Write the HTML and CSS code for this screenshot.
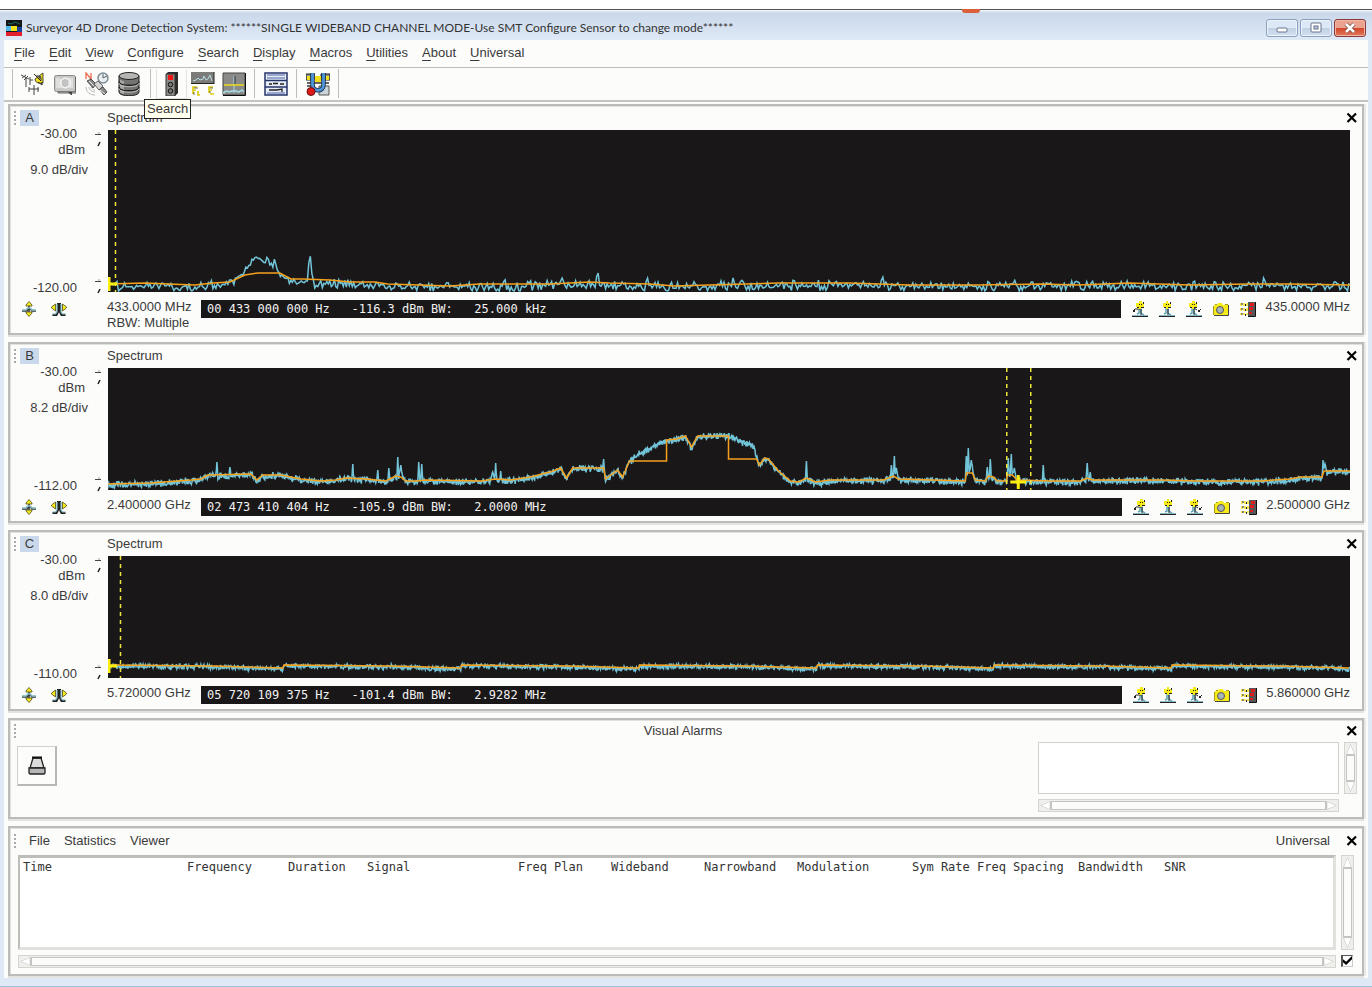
FILE: index.html
```html
<!doctype html>
<html lang="en">
  <head>
    <meta charset="UTF-8" />
    <meta name="viewport" content="width=device-width, initial-scale=1.0" />
    <title>Surveyor 4D Drone Detection System</title>
    <link rel="stylesheet" href="styles.css">
    <script src="plots.js" defer></script>
  </head>

  <body>
    <!-- shared icons -->
    <svg class="sprite" aria-hidden="true">
      <symbol id="i-expand-v" viewBox="0 0 16 16">
        <path d="M8 3v11" stroke="#333" stroke-width="1.500" />
        <path d="M1 10h5l1.500-2h2l1.500 2h4" fill="none" stroke="#333" stroke-width="1.500" />
        <path d="M1 9h4l2-2h2l2 2h4" fill="none" stroke="#7fb9c4" stroke-width="1.500" />
        <path d="M8 .5L11 4v1H5V4zM8 15.500L11 12v-1H5v1z" fill="#f7ea19" stroke="#4d4a20" stroke-width=".8" />
      </symbol>
      <symbol id="i-expand-h" viewBox="0 0 16 16">
        <path d="M1.500 14h4l1.500-3V2M14.500 14h-4L9 11V2" fill="none" stroke="#222" stroke-width="2" />
        <path d="M1.500 13h3l1.500-2V3M14.500 13h-3L10 11V3" fill="none" stroke="#7fb9c4" stroke-width="1.200" />
        <path d="M4.500 3v7L.5 7V6zM11.500 3v7l4-3V6z" fill="#f7ea19" stroke="#4d4a20" stroke-width=".8" />
      </symbol>
      <symbol id="i-peak-left" viewBox="0 0 16 16">
        <path d="M0 15h16M5 13l2-1V8h2v4l3 2" fill="none" stroke="#5fa3b3" stroke-width="1.500" />
        <path d="M0 15.500h16M9 8v6M1 10l2-2h5" fill="none" stroke="#222" />
        <path d="M4 2h3V0h3v2h2v4H9v2H6V6H4z" fill="#f7ea19" />
        <path d="M7 3h1v1H7zM9 3h1v1H9zM11 1h1v2h-1zM9 6h3v1H9zM5 6h2v1H5zM1 9h2v2H1z" fill="#222" />
      </symbol>
      <symbol id="i-peak" viewBox="0 0 16 16">
        <path d="M0 15h16M5 13l2-1V8h2v4l3 2" fill="none" stroke="#5fa3b3" stroke-width="1.500" />
        <path d="M0 15.500h16M9 8v6" fill="none" stroke="#222" />
        <path d="M4 2h3V0h2v2h3v4H9v2H7V6H4z" fill="#f7ea19" />
        <path d="M7 3h1v1H7zM9 3h1v1H9zM11 1h1v2h-1zM9 6h3v1H9zM5 6h2v1H5z" fill="#222" />
      </symbol>
      <symbol id="i-peak-right" viewBox="0 0 16 16">
        <path d="M0 15h16M4 13l2-1V8h2v4l3 2" fill="none" stroke="#5fa3b3" stroke-width="1.500" />
        <path d="M0 15.500h16M8 8v6M8 7l3 2M13 10l2-2" fill="none" stroke="#222" />
        <path d="M3 2h3V0h3v2h2v4H8v2H6V6H3z" fill="#f7ea19" />
        <path d="M6 3h1v1H6zM8 3h1v1H8zM10 1h1v2h-1zM8 6h3v1H8zM4 6h2v1H4zM12 9h2v2h-2z" fill="#222" />
      </symbol>
      <symbol id="i-camera" viewBox="0 0 16 16">
        <path d="M1 4h3l1-2h4l1 2h5v10H1z" fill="#f7ea19" />
        <path d="M1 14.500h14.500V4" fill="none" stroke="#444" />
        <path d="M.5 14V5M2 3.500h2M12 3.500h3" fill="none" stroke="#a99a20" />
        <circle cx="7" cy="9" r="3.500" fill="#a9b4b8" stroke="#555" />
      </symbol>
      <symbol id="i-scan" viewBox="0 0 16 16">
        <path d="M1 2v12M4 2v12M7 2v12" stroke="#f0df20" stroke-width="1.500" stroke-dasharray="3 2" />
        <path d="M2 2v12M5.500 3v12" stroke="#222" stroke-dasharray="2 3" />
        <path d="M8 1h7v14H8z" fill="#555" />
        <path d="M15.500 1v14.500H8" fill="none" stroke="#111" />
        <path d="M10 2h4v3h-4zM9 6h4v3H9zM9 11h3v2H9z" fill="#e01b1b" />
      </symbol>
      <symbol id="i-close" viewBox="0 0 12 12">
        <path d="M1.500 1.500l8.500 8.500M10 1.500L1.500 10" stroke="#000" stroke-width="2.200" />
      </symbol>
      <symbol id="i-ticks" viewBox="0 0 8 16">
        <path d="M1 3.500h6M5 1.500v1" stroke="#444" />
        <path d="M6 11l-2 4" stroke="#222" stroke-width="1.500" />
      </symbol>
    </svg>

    <div class="desktop"><span class="tab"></span></div>
    <div class="window">
      <header class="titlebar">
        <svg class="logo" viewBox="0 0 16 16" aria-hidden="true">
          <path d="M0 0h16v16H0z" fill="#151515" />
          <path d="M2 3l3 1 4-2 5 2" fill="none" stroke="#1c6d6a" />
          <path d="M0 6h6v5H0z" fill="#4fb6e8" />
          <path d="M5 6h6v5H5z" fill="#f4e21b" />
          <path d="M11 7h5v5h-5z" fill="#1c3f96" />
          <path d="M0 12h16v4H0z" fill="#e3202b" />
        </svg>
        <h1>Surveyor 4D Drone Detection System: ******SINGLE WIDEBAND CHANNEL MODE-Use SMT Configure Sensor to change mode******</h1>
        <div class="window-buttons">
          <button aria-label="Minimize"><svg viewBox="0 0 14 12"><rect x="2" y="6" width="10" height="4" rx="1" fill="#fff" stroke="#66738a" /></svg></button>
          <button aria-label="Maximize"><svg viewBox="0 0 14 12"><rect x="2" y="1" width="10" height="9" rx="1" fill="#fff" stroke="#66738a" /><rect x="5" y="4" width="4" height="3" fill="#b9c8dc" stroke="#66738a" /></svg></button>
          <button class="quit" aria-label="Close"><svg viewBox="0 0 14 12"><path d="M3 2l8 8M11 2l-8 8" stroke="#7c4a4a" stroke-width="4" /><path d="M3 2l8 8M11 2l-8 8" stroke="#fff" stroke-width="2.500" /></svg></button>
        </div>
      </header>

      <div class="client">
        <nav class="menubar">
          <button><u>F</u>ile</button>
          <button><u>E</u>dit</button>
          <button><u>V</u>iew</button>
          <button><u>C</u>onfigure</button>
          <button><u>S</u>earch</button>
          <button><u>D</u>isplay</button>
          <button><u>M</u>acros</button>
          <button><u>U</u>tilities</button>
          <button><u>A</u>bout</button>
          <button><u>U</u>niversal</button>
        </nav>

        <div class="toolbar" role="toolbar">
          <div class="tools wide">
            <button aria-label="Antennas">
              <svg viewBox="0 0 24 24">
                <path d="M0 3l8 4M1 6l4-3M3 8l4-4M5 5v10M9 5v8M9 8h3M8 17h10M8 15v5M13 13v10M17 15v5" fill="none" stroke="#444" />
                <path d="M22 1v10c-5 1-8-1-8-4z" fill="#f2e01d" stroke="#222" stroke-width=".8" />
                <path d="M13 2l7 7M17 10l4 3v-3" fill="none" stroke="#222" />
                <path d="M15 3l5 1 1 5z" fill="#555" />
              </svg>
            </button>
            <button aria-label="Receiver">
              <svg viewBox="0 0 24 24">
                <rect x="1.500" y="3.500" width="21" height="16" rx="2" fill="#c9c9c7" stroke="#8b8b89" />
                <path d="M22.500 5v15H5v1h18" fill="none" stroke="#666" />
                <path d="M4 6v10M6 6v10M8 7v9M17 6v10M19 6v10" stroke="#f5f5f5" />
                <circle cx="12.500" cy="11" r="5" fill="#ddd" stroke="#fff" />
                <path d="M10 8v6M12 7v8M14 8v6" stroke="#aaa" />
                <path d="M15 20l3 3h1v-3z" fill="#444" />
              </svg>
            </button>
            <button aria-label="Navigation">
              <svg viewBox="0 0 24 24">
                <path d="M1 7V1l5 6V1" fill="none" stroke="#ec6a4c" stroke-width="1.300" />
                <circle cx="18" cy="6" r="5" fill="#e9eef0" stroke="#7e8d94" stroke-width="1.500" />
                <path d="M18 2v4l4-2" fill="none" stroke="#54646c" />
                <path d="M2 9l4-2 5 5-3 4zM14 17l4-2 4 5-3 3z" fill="#888" stroke="#333" stroke-width=".8" />
                <path d="M9 12l4-3 5 5-4 4z" fill="#d5d5d5" stroke="#444" stroke-width=".8" />
                <path d="M4 9l5 5M15 18l5 4" stroke="#eee" />
                <path d="M1 15c0 5 4 8 9 8M4 15c0 3 3 5 6 5M6 15c1 2 2 3 4 3" fill="none" stroke="#b9b9b9" />
              </svg>
            </button>
            <button aria-label="Database">
              <svg viewBox="0 0 24 24">
                <path d="M2 4v16c0 5 20 5 20 0V4z" fill="#747472" stroke="#222" />
                <path d="M4 8v13M6 9v13" stroke="#a5a5a3" stroke-width="2" />
                <ellipse cx="12" cy="4" rx="10" ry="3.500" fill="#b5b5b3" stroke="#222" />
                <path d="M2 9.500c0 5 20 5 20 0M2 15c0 5 20 5 20 0" fill="none" stroke="#222" stroke-width="1.300" />
                <path d="M2 11c0 5 20 5 20 0M2 16.500c0 5 20 5 20 0" fill="none" stroke="#d0d0ce" stroke-width=".8" />
              </svg>
            </button>
          </div>
          <div class="tools">
            <button class="hover" aria-label="Search" aria-describedby="tip-search">
              <svg viewBox="0 0 24 24">
                <path d="M6 2l2-2h10v21l-3 3H6z" fill="#2b2b2b" />
                <path d="M6 2h9v22H6z" fill="#8a8a88" stroke="#333" />
                <path d="M8 3h5v5H8z" fill="#f01414" />
                <circle cx="10.500" cy="12.500" r="2.300" fill="#777" stroke="#111" />
                <circle cx="10.500" cy="19" r="2.300" fill="#777" stroke="#111" />
              </svg>
              <span class="tooltip" id="tip-search" role="tooltip">Search</span>
            </button>
            <button aria-label="Frequency lists">
              <svg viewBox="0 0 24 24">
                <path d="M0 0h23v11H0z" fill="#7b7b79" />
                <path d="M0 11.500h23M23 0v12" fill="none" stroke="#222" />
                <path d="M2 9l3-1 2-2 2 2 3-1 1-3 2 4 2-1 2-4 2 6" fill="none" stroke="#b8dfe6" />
                <path d="M6 15H2v7M2 18h3M7 19v4h2M22 15h-4v6M18 18h3M19 22h4" fill="none" stroke="#dccb10" stroke-width="1.700" />
                <path d="M3 16h4M3 20v3M19 16h3M19 19v2" fill="none" stroke="#333" stroke-width=".7" />
              </svg>
            </button>
            <button aria-label="Spectrum display">
              <svg viewBox="0 0 24 24">
                <path d="M1 1h22v22H1z" fill="#8a8a88" stroke="#444" />
                <path d="M23.500 1v22.500H1" fill="none" stroke="#111" />
                <path d="M2 22v-2l3-1 2 1 3-1h4l3 1 3-2 2 2" fill="none" stroke="#a5dce6" stroke-width="1.500" />
                <path d="M12 4v17" stroke="#a5dce6" />
                <path d="M2 13h20" stroke="#eadb1a" stroke-width="1.500" />
                <path d="M13 4v8" stroke="#333" />
              </svg>
            </button>
          </div>
          <div class="tools">
            <button aria-label="Mission list">
              <svg viewBox="0 0 24 24">
                <path d="M1 1h22v22H1z" fill="#e8ecf6" stroke="#26336b" stroke-width="1.500" />
                <path d="M1 8.500h22M1 15h22" stroke="#26336b" stroke-width="1.500" />
                <path d="M3 3h18M3 6h18M3 21h18" stroke="#7f91c4" stroke-width="1.500" />
                <path d="M5 12h3M9 11.500h5M16 12h4" stroke="#222" stroke-width="1.500" />
                <path d="M5 18h8l5-1v3" fill="none" stroke="#222" stroke-width="1.300" />
              </svg>
            </button>
          </div>
          <div class="tools">
            <button aria-label="Diagnostics">
              <svg viewBox="0 0 24 24">
                <path d="M0 2h8v6H0zM15 2h9v6h-9z" fill="#8e8e8c" stroke="#222" />
                <path d="M9 4h6v6H9zM20 4h3v4h-3zM1 4h3v4H1z" fill="#f1df1e" />
                <path d="M1 11h22M1 14h5M17 12v5" stroke="#333" stroke-width="1.500" />
                <path d="M13 14h10v9H13z" fill="#c9d4d8" stroke="#555" />
                <path d="M6.500 1v12c0 7 11 7 11 0V1" fill="none" stroke="#1a2c47" stroke-width="4.500" />
                <path d="M6.500 1v12c0 7 11 7 11 0V1" fill="none" stroke="#4d96d9" stroke-width="2.800" />
                <circle cx="5" cy="19.500" r="4" fill="#e01818" stroke="#611" />
              </svg>
            </button>
          </div>
        </div>

        <main class="panels">
          <section class="panel channel tall">
            <header class="panel-head">
              <span class="grip"></span><span class="badge">A</span>
              <h2>Spectrum</h2>
              <button class="close" aria-label="Close A"><svg><use href="#i-close" /></svg></button>
            </header>
            <div class="scope">
              <div class="scale">
                <div><span>-30.00</span><span class="unit">dBm</span><span class="div">9.0 dB/div</span></div>
                <span>-120.00</span>
                <svg class="ticks top"><use href="#i-ticks" /></svg>
                <svg class="ticks bottom"><use href="#i-ticks" /></svg>
              </div>
              <svg class="plot" id="plot_a" viewBox="0 0 1243 162" preserveAspectRatio="none"></svg>
            </div>
            <footer class="panel-foot">
              <div class="zoomers">
                <button aria-label="Scale vertical"><svg><use href="#i-expand-v" /></svg></button>
                <button aria-label="Scale horizontal"><svg><use href="#i-expand-h" /></svg></button>
              </div>
              <p class="start">433.0000 MHz<br>RBW: Multiple</p>
              <output class="readout">00 433 000 000 Hz   -116.3 dBm BW:   25.000 kHz</output>
              <div class="actions">
                <button aria-label="Peak left"><svg><use href="#i-peak-left" /></svg></button>
                <button aria-label="Peak"><svg><use href="#i-peak" /></svg></button>
                <button aria-label="Peak right"><svg><use href="#i-peak-right" /></svg></button>
                <button aria-label="Snapshot"><svg><use href="#i-camera" /></svg></button>
                <button aria-label="Scan"><svg><use href="#i-scan" /></svg></button>
              </div>
              <p>435.0000 MHz</p>
            </footer>
          </section>

          <section class="panel channel">
            <header class="panel-head">
              <span class="grip"></span><span class="badge">B</span>
              <h2>Spectrum</h2>
              <button class="close" aria-label="Close B"><svg><use href="#i-close" /></svg></button>
            </header>
            <div class="scope">
              <div class="scale">
                <div><span>-30.00</span><span class="unit">dBm</span><span class="div">8.2 dB/div</span></div>
                <span>-112.00</span>
                <svg class="ticks top"><use href="#i-ticks" /></svg>
                <svg class="ticks bottom"><use href="#i-ticks" /></svg>
              </div>
              <svg class="plot" id="plot_b" viewBox="0 0 1243 122" preserveAspectRatio="none"></svg>
            </div>
            <footer class="panel-foot">
              <div class="zoomers">
                <button aria-label="Scale vertical"><svg><use href="#i-expand-v" /></svg></button>
                <button aria-label="Scale horizontal"><svg><use href="#i-expand-h" /></svg></button>
              </div>
              <p class="start">2.400000 GHz</p>
              <output class="readout">02 473 410 404 Hz   -105.9 dBm BW:   2.0000 MHz</output>
              <div class="actions">
                <button aria-label="Peak left"><svg><use href="#i-peak-left" /></svg></button>
                <button aria-label="Peak"><svg><use href="#i-peak" /></svg></button>
                <button aria-label="Peak right"><svg><use href="#i-peak-right" /></svg></button>
                <button aria-label="Snapshot"><svg><use href="#i-camera" /></svg></button>
                <button aria-label="Scan"><svg><use href="#i-scan" /></svg></button>
              </div>
              <p>2.500000 GHz</p>
            </footer>
          </section>

          <section class="panel channel">
            <header class="panel-head">
              <span class="grip"></span><span class="badge">C</span>
              <h2>Spectrum</h2>
              <button class="close" aria-label="Close C"><svg><use href="#i-close" /></svg></button>
            </header>
            <div class="scope">
              <div class="scale">
                <div><span>-30.00</span><span class="unit">dBm</span><span class="div">8.0 dB/div</span></div>
                <span>-110.00</span>
                <svg class="ticks top"><use href="#i-ticks" /></svg>
                <svg class="ticks bottom"><use href="#i-ticks" /></svg>
              </div>
              <svg class="plot" id="plot_c" viewBox="0 0 1243 122" preserveAspectRatio="none"></svg>
            </div>
            <footer class="panel-foot">
              <div class="zoomers">
                <button aria-label="Scale vertical"><svg><use href="#i-expand-v" /></svg></button>
                <button aria-label="Scale horizontal"><svg><use href="#i-expand-h" /></svg></button>
              </div>
              <p class="start">5.720000 GHz</p>
              <output class="readout">05 720 109 375 Hz   -101.4 dBm BW:   2.9282 MHz</output>
              <div class="actions">
                <button aria-label="Peak left"><svg><use href="#i-peak-left" /></svg></button>
                <button aria-label="Peak"><svg><use href="#i-peak" /></svg></button>
                <button aria-label="Peak right"><svg><use href="#i-peak-right" /></svg></button>
                <button aria-label="Snapshot"><svg><use href="#i-camera" /></svg></button>
                <button aria-label="Scan"><svg><use href="#i-scan" /></svg></button>
              </div>
              <p>5.860000 GHz</p>
            </footer>
          </section>

          <section class="panel alarms">
            <header class="panel-head">
              <span class="grip"></span>
              <h2>Visual Alarms</h2>
              <button class="close" aria-label="Close alarms"><svg><use href="#i-close" /></svg></button>
            </header>
            <div class="alarms-body">
              <button class="alarm-button" aria-label="Alarm">
                <svg viewBox="0 0 18 19">
                  <path d="M5 2h8l3 10H2z" fill="#dcdcdc" stroke="#222" stroke-width="1.300" />
                  <path d="M4 1.500h10" stroke="#111" stroke-width="2" />
                  <path d="M1 12h16v5l-1 1H2l-1-1z" fill="#b5b5b5" stroke="#222" stroke-width="1.300" />
                </svg>
              </button>
              <div class="scroller">
                <textarea class="log" aria-label="Alarm log" readonly></textarea>
                <div class="bar vertical"><button aria-label="Up"></button><span></span><button aria-label="Down"></button></div>
                <div class="bar horizontal"><button aria-label="Left"></button><span></span><button aria-label="Right"></button></div>
              </div>
            </div>
          </section>

          <section class="panel universal">
            <header class="panel-head">
              <span class="grip"></span>
              <nav>
                <button>File</button>
                <button>Statistics</button>
                <button>Viewer</button>
              </nav>
              <h2>Universal</h2>
              <button class="close" aria-label="Close universal"><svg><use href="#i-close" /></svg></button>
            </header>
            <div class="scroller">
              <div class="list">
                <table>
                  <colgroup>
                    <col class="w-time"><col class="w-mid"><col class="w-dur"><col class="w-signal"><col class="w-band"><col class="w-band">
                    <col class="w-band"><col class="w-mod"><col class="w-rate"><col class="w-mid"><col class="w-bw"><col>
                  </colgroup>
                  <thead>
                    <tr>
                      <th>Time</th><th>Frequency</th><th>Duration</th><th>Signal</th><th>Freq Plan</th><th>Wideband</th>
                      <th>Narrowband</th><th>Modulation</th><th>Sym Rate</th><th>Freq Spacing</th><th>Bandwidth</th><th>SNR</th>
                    </tr>
                  </thead>
                </table>
              </div>
              <div class="bar vertical"><button aria-label="Up"></button><span></span><button aria-label="Down"></button></div>
              <div class="bar horizontal"><button aria-label="Left"></button><span></span><button aria-label="Right"></button></div>
              <input class="follow" type="checkbox" aria-label="Auto scroll" checked>
            </div>
          </section>
        </main>
      </div>
    </div>
  </body>
</html>
```

FILE: styles.css
```css
* {
  box-sizing: border-box;
}
html,
body {
  margin: 0;
  padding: 0;
}
body {
  display: flex;
  flex-direction: column;
  min-height: 100vh;
  background: #fff;
  color: #3a3a3a;
  font: 13px/16px "Liberation Sans", Arial, sans-serif;
}
button {
  margin: 0;
  padding: 0;
  border: 0;
  background: none;
  color: inherit;
  font: inherit;
}
h1,
h2,
p {
  margin: 0;
  font-size: inherit;
  font-weight: normal;
}
svg {
  display: block;
}
.sprite {
  position: absolute;
  width: 0;
  height: 0;
}
.desktop {
  height: 9px;
}
.tab {
  position: absolute;
  top: 9px;
  left: 962px;
  width: 18px;
  height: 4px;
  border-radius: 0 0 3px 3px;
  background: #d9603a;
}

/* window frame */
.window {
  flex: 1;
  display: flex;
  flex-direction: column;
  padding: 0 4px 8px;
  border-top: 1px solid #555;
  border-bottom: 2px solid #9cc4d6;
  background: #dfe9f5;
}
.titlebar {
  display: flex;
  align-items: center;
  gap: 4px;
  height: 30px;
  margin: 0 -4px;
  padding: 6px 6px 0;
  background: linear-gradient(#f2f6fb, #cad8ea 3px, #dfe9f6);
}
.logo {
  width: 16px;
  height: 16px;
}
.titlebar h1 {
  flex: 1;
  font: 12px/16px Lato, "Open Sans", sans-serif;
  color: #333;
  white-space: nowrap;
}
.window-buttons {
  display: flex;
  gap: 2px;
}
.window-buttons button {
  display: grid;
  place-items: center;
  width: 32px;
  height: 18px;
  border: 1px solid #8b9fbf;
  border-radius: 3px;
  background: linear-gradient(#dce8f5 50%, #c0d0e4 50%, #d3e0f0);
  box-shadow: inset 0 0 0 1px #edf4fb;
}
.window-buttons .quit {
  border-color: #8a3a3a;
  background: linear-gradient(#eba38f 50%, #d2452a 50%, #e0795c);
  box-shadow: inset 0 0 0 1px #f0b7a6;
}
.window-buttons svg {
  width: 14px;
  height: 12px;
}
.client {
  flex: 1;
  display: flex;
  flex-direction: column;
  background: #fcfcfa;
}

/* menu and toolbar */
.menubar {
  display: flex;
  gap: 14px;
  height: 28px;
  padding: 0 10px 2px;
  border-bottom: 1px solid #bdbdb9;
}
.menubar u {
  text-underline-offset: 3px;
}
.toolbar {
  display: flex;
  height: 34px;
  padding-left: 8px;
  border-bottom: 2px solid #c4c4c0;
}
.tools {
  display: flex;
  align-items: center;
  margin: 1px 5px 2px 0;
  padding-right: 5px;
  border-right: 1px solid #bdbdb9;
}
.tools:first-child {
  padding-left: 4px;
  border-left: 1px solid #bdbdb9;
}
.tools button {
  position: relative;
  display: grid;
  place-items: center;
  width: 31px;
  height: 30px;
}
.tools.wide button {
  width: 32px;
}
.tools .hover {
  border: 1px solid #e2e2de;
  border-top-color: #fff;
}
.tools svg {
  width: 24px;
  height: 24px;
}
.tooltip {
  position: absolute;
  z-index: 2;
  top: 29px;
  left: -13px;
  padding: 1px 2px;
  border: 1px solid #222;
  background: #fffff0;
}

/* panels */
.panels {
  flex: 1;
  display: flex;
  flex-direction: column;
  gap: 7px;
  padding: 2px 4px 2px;
}
.panel {
  border: 2px solid #bbbbb7;
  box-shadow: inset 1px 1px #e0e0dc, 0 2px #e3e3df, 2px 0 #e8e8e4;
}
.panel-head {
  display: flex;
  align-items: center;
  height: 24px;
  padding: 0 4px;
}
.grip {
  width: 2px;
  height: 14px;
  margin-right: 4px;
  background: repeating-linear-gradient(#aaa 0 2px, transparent 2px 4px);
}
.badge {
  width: 19px;
  margin-right: 68px;
  background: #c9d8ea;
  text-align: center;
}
.panel-head h2 {
  flex: 1;
}
.close svg {
  width: 12px;
  height: 12px;
}
.scope {
  display: grid;
  grid-template-columns: 98px 1fr;
  height: 122px;
  padding-right: 12px;
}
.tall .scope {
  height: 162px;
}
.plot {
  width: 100%;
  height: 100%;
  background: #1a1718;
}
.plot * {
  fill: none;
  vector-effect: non-scaling-stroke;
}
.signal {
  stroke: #72c4d8;
  stroke-width: 1.5;
}
.average {
  stroke: #f5a11c;
  stroke-width: 1.5;
}
.marker {
  stroke: #f0e43a;
  stroke-width: 1.5;
  stroke-dasharray: 4 4;
}
.cross {
  stroke: #fbee0c;
  stroke-width: 3;
}
.scale {
  position: relative;
  display: flex;
  flex-direction: column;
  justify-content: space-between;
  margin: -4px 0;
  padding-right: 31px;
  text-align: right;
}
.scale span {
  display: block;
}
.scale .unit {
  margin-right: -8px;
}
.scale .div {
  margin: 4px -11px 0 0;
}
.ticks {
  position: absolute;
  right: 6px;
  width: 8px;
  height: 16px;
}
.ticks.top {
  top: 5px;
}
.ticks.bottom {
  bottom: 2px;
}
.panel-foot {
  display: flex;
  align-items: flex-start;
  height: 31px;
  padding: 7px 12px 0 0;
}
.tall .panel-foot {
  height: 41px;
}
.zoomers {
  display: flex;
  gap: 14px;
  width: 97px;
  padding: 2px 0 0 11px;
}
.zoomers svg,
.actions svg {
  width: 16px;
  height: 16px;
}
.start {
  width: 94px;
}
.readout {
  flex: 1;
  height: 18px;
  margin-top: 1px;
  padding-left: 6px;
  background: #1a1718;
  color: #f2f2f2;
  font: 12px/18px "DejaVu Sans Mono", monospace;
  white-space: pre;
}
.actions {
  display: flex;
  gap: 11px;
  padding: 2px 9px 0 11px;
}

/* alarms */
.alarms .panel-head {
  height: 22px;
}
.alarms h2 {
  text-align: center;
}
.alarms-body {
  display: flex;
  justify-content: space-between;
  padding: 0 5px 5px 7px;
}
.alarm-button {
  display: grid;
  place-items: center;
  width: 40px;
  height: 40px;
  margin-top: 4px;
  border: 1px solid #d0d0cc;
  border-right: 2px solid #b8b8b4;
  border-bottom: 2px solid #b8b8b4;
}
.alarm-button svg {
  width: 18px;
  height: 19px;
}
.scroller {
  display: grid;
  grid-template-columns: 1fr 13px;
  gap: 5px;
}
.alarms .scroller {
  width: 319px;
}
.log {
  width: 100%;
  height: 52px;
  border: 1px solid #d0d0cc;
  background: #fff;
  resize: none;
}
.bar {
  display: flex;
  padding: 1px;
  border: 1px solid #d4d4d0;
  background: #efefec;
}
.bar.vertical {
  flex-direction: column;
}
.bar.horizontal {
  height: 13px;
}
.bar span {
  flex: 1;
  border: 1px solid #c4c4c0;
  background: #fcfcfa;
}
.bar button {
  flex: 0 0 11px;
  background: #c4c4c0;
}
.vertical button {
  clip-path: polygon(50% 0, 100% 100%, 0 100%);
}
.vertical button:last-child {
  clip-path: polygon(0 0, 100% 0, 50% 100%);
}
.horizontal button {
  clip-path: polygon(0 50%, 100% 0, 100% 100%);
}
.horizontal button:last-child {
  clip-path: polygon(0 0, 100% 50%, 0 100%);
}
.bar button::before {
  content: "";
  display: block;
  height: 100%;
  background: #fff;
  clip-path: inherit;
  transform: scale(0.8);
}

/* universal list */
.universal {
  flex: 1;
  display: flex;
  flex-direction: column;
}
.universal .panel-head {
  height: 27px;
  padding-bottom: 2px;
}
.universal nav {
  display: flex;
  flex: 1;
  gap: 14px;
  padding-left: 9px;
}
.universal h2 {
  flex: none;
  margin-right: 16px;
}
.universal .scroller {
  flex: 1;
  grid-template-rows: 1fr 13px;
  padding: 0 8px 6px;
}
.list {
  min-height: 95px;
  padding: 1px 3px;
  border: 3px solid #e0e0dc;
  border-top-color: #bdbdb9;
  border-left: 2px solid #bdbdb9;
  background: #fff;
}
table {
  width: 100%;
  border-collapse: collapse;
  table-layout: fixed;
}
th {
  padding: 0;
  font: 12px/16px "DejaVu Sans Mono", monospace;
  color: #333;
  text-align: left;
  white-space: nowrap;
}
.w-time {
  width: 164px;
}
.w-mid {
  width: 101px;
}
.w-dur {
  width: 79px;
}
.w-signal {
  width: 151px;
}
.w-band {
  width: 93px;
}
.w-mod {
  width: 115px;
}
.w-rate {
  width: 65px;
}
.w-bw {
  width: 86px;
}
.follow {
  appearance: none;
  width: 12px;
  height: 12px;
  margin: 0;
  border: 1px solid #ccc;
  border-top-color: #555;
  border-left: 2px solid #555;
  background: #fff;
}
.follow:checked::before {
  content: "";
  display: block;
  width: 9px;
  height: 9px;
  background: #000;
  clip-path: polygon(0 35%, 35% 65%, 100% 0, 100% 35%, 35% 100%, 0 70%);
}
```

FILE: plots.js
```js
const SVG = 'http://www.w3.org/2000/svg'

// small seeded generator so that the noise is the same on every load
function noise(seed) {
  return () => {
    seed = (seed * 16807) % 2147483647
    return seed / 2147483647 - 0.5
  }
}

function level(points, x) {
  for (let i = 1; i < points.length; i++) {
    const [x0, y0] = points[i - 1]
    const [x1, y1] = points[i]
    if (x <= x1) return x1 === x0 ? y1 : y0 + ((y1 - y0) * (x - x0)) / (x1 - x0)
  }
  return points[points.length - 1][1]
}

function add(plot, cls, d) {
  const path = document.createElementNS(SVG, 'path')
  path.setAttribute('class', cls)
  path.setAttribute('d', d)
  plot.append(path)
}

function draw(id, { height, seed, step, amp, offset, signal, average, spikes, markers, cross }) {
  const plot = document.getElementById(id)
  const rnd = noise(seed)
  const trace = []
  for (let x = 0; x <= 1243; x += step) {
    let y = level(signal, x) + offset + (rnd() + rnd()) * amp
    for (const [sx, top, width] of spikes) {
      const near = Math.abs(x - sx)
      if (near <= width) y = Math.min(y, top + (y - top) * (near / width))
    }
    trace.push(`${x} ${Math.min(y, height - 1).toFixed(1)}`)
  }
  add(plot, 'signal', 'M' + trace.join('L'))
  add(plot, 'average', 'M' + average.map(p => p.join(' ')).join('L'))
  markers.forEach(x => add(plot, 'marker', `M${x} 0V${height}`))
  const [cx, cy] = cross
  add(plot, 'cross', `M${cx} ${cy - 7}V${cy + 7}M${cx - 8} ${cy}H${cx + 8}`)
}

const averageA = [
  [0, 154], [37, 153], [60, 154], [87, 155], [105, 153], [122, 152], [137, 145], [150, 143], [172, 143],
  [183, 149], [195, 149], [222, 150], [242, 152], [267, 152], [280, 154], [342, 156], [372, 154], [442, 154],
  [482, 152], [502, 153], [542, 154], [567, 156], [602, 155], [672, 153], [742, 153], [802, 155], [872, 155],
  [932, 154], [972, 155], [1022, 153], [1082, 155], [1142, 154], [1182, 154], [1243, 155],
]
draw('plot_a', {
  height: 162, seed: 4021, step: 1.5, amp: 6, offset: 1.5,
  average: averageA,
  signal: [
    [0, 154], [60, 154], [87, 156], [115, 153], [128, 148], [135, 143], [140, 133], [147, 128], [154, 126],
    [160, 128], [167, 133], [173, 143], [183, 150], [195, 152], [240, 153], [280, 155], [342, 156], [400, 155],
    [482, 153], [567, 155], [672, 154], [742, 154], [872, 155], [1022, 154], [1142, 155], [1243, 155],
  ],
  spikes: [[202, 121, 3], [397, 148, 2], [455, 146, 2], [490, 140, 2], [540, 148, 2], [626, 147, 2], [775, 145, 2], [1157, 145, 2]],
  markers: [7.5], cross: [1, 154],
})

const left = [
  [0, 116], [43, 115], [83, 112], [93, 111], [100, 107], [143, 106], [149, 112], [155, 107], [173, 107],
  [193, 111], [213, 113], [228, 112], [238, 110], [258, 111], [278, 113], [288, 108], [293, 109], [298, 113],
  [308, 113], [318, 112], [373, 113], [388, 111], [403, 112], [423, 109], [438, 105], [443, 104], [453, 100],
  [459, 110], [465, 100], [496, 100], [498, 111], [510, 102], [515, 109], [522, 93],
]
const right = [
  [652, 97], [657, 90], [661, 91], [671, 103], [683, 113], [691, 114], [699, 110], [708, 114], [723, 112],
  [748, 112], [776, 112], [786, 108], [791, 111], [858, 113], [859, 105], [865, 105], [868, 112], [878, 113],
  [881, 108], [886, 109], [890, 113], [899, 113], [900, 107], [905, 107], [910, 112], [943, 113], [973, 113],
  [980, 110], [985, 112], [1053, 112], [1093, 113], [1153, 113], [1183, 111], [1193, 109], [1215, 109],
  [1217, 103], [1243, 103],
]
draw('plot_b', {
  height: 122, seed: 977, step: 0.5, amp: 4, offset: 1,
  average: [
    ...left, [559, 93], [559, 72], [569, 71], [578, 68], [584, 79], [590, 68], [621, 68], [621, 91],
    [649, 91], ...right,
  ],
  signal: [
    ...left, [533, 84], [543, 79], [553, 74], [569, 70], [578, 68], [584, 80], [590, 67], [621, 67],
    [633, 73], [646, 77], ...right,
  ],
  spikes: [
    [109, 94, 1], [122, 99, 1], [245, 96, 1], [270, 102, 1], [281, 100, 1], [290, 89, 1], [293, 97, 2], [311, 94, 1], [314, 96, 1],
    [385, 104, 2], [388, 95, 1], [393, 103, 1], [496, 91, 1], [699, 93, 1], [784, 97, 1], [787, 88, 1], [789, 100, 2],
    [859, 88, 1], [861, 80, 1], [864, 92, 2], [880, 99, 1], [883, 91, 1], [901, 90, 1], [904, 86, 1], [907, 100, 2],
    [936, 97, 1], [980, 95, 1], [983, 104, 1], [1216, 92, 1], [1218, 96, 2],
  ],
  markers: [899.5, 923.5], cross: [911, 114],
})

// each receiver step covers the same share of the span
const steps = [0, 176, 354, 532, 710, 887, 1065, 1243]
const averageC = []
for (let i = 1; i < steps.length; i++) {
  averageC.push([steps[i - 1], 109], [steps[i] - 70, 110], [steps[i] - 1, 112])
}
draw('plot_c', {
  height: 122, seed: 3313, step: 0.5, amp: 3, offset: 1,
  average: averageC,
  signal: averageC,
  spikes: [],
  markers: [12.5], cross: [1, 110],
})
```
